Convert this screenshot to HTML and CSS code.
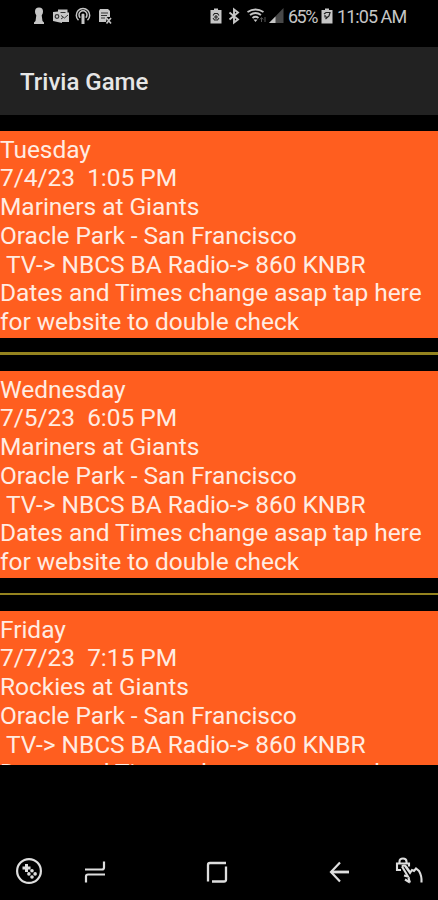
FILE: index.html
```html
<!DOCTYPE html>
<html lang="en">
<head>
  <meta charset="UTF-8" />
  <meta name="viewport" content="width=device-width, initial-scale=1.0"/>
  <title>Trivia Game</title>
  <link rel="stylesheet" href="styles.css">
</head>
<body>
  <div class="status-bar">
    <div class="notifications">
      <svg width="16" height="18" viewBox="0 0 16 18" fill="currentColor"><circle cx="8" cy="4.600" r="4"/><path d="M4.500 6.500h7l-.8 2L11.500 14l1.500 1.500V17H3v-1.500L4.500 14l.8-5.500z"/></svg>
      <svg width="16" height="18" viewBox="0 0 16 18"><path fill="currentColor" d="M5 2.500h9.500v3H16V15H9v1L0 14V5l5-.5z"/><circle cx="4" cy="9.500" r="1.800" fill="none" stroke="#333" stroke-width="1.200"/><path fill="none" stroke="#333" d="M7.500 5.500h5M8 8.500l3.500 2.500L15 8M8 12l2-1.500"/></svg>
      <svg width="16" height="18" viewBox="0 0 16 18" fill="none" stroke="currentColor" stroke-width="1.500"><path d="M3.500 13.200a6.700 6.700 0 1 1 9 0M5.200 10.700a4 4 0 1 1 5.600 0"/><circle cx="8" cy="8" r="1.600" fill="currentColor" stroke="none"/><path d="M8 9v8" stroke-width="3"/></svg>
      <svg width="16" height="18" viewBox="0 0 16 18"><path fill="currentColor" d="M3 2h8l2 2v6h-3l-1 5H2V4z"/><path stroke="#333" d="M4 6h7M4 8.500h6M4 11h4"/><path stroke="currentColor" stroke-width="1.600" d="M9.500 11l4.500 5.500M14 11l-4.500 5.500"/></svg>
    </div>
    <div class="system">
      <svg width="12" height="18" viewBox="0 0 12 18"><path fill="currentColor" d="M4 1.500h4V3h3.500v13.500H.5V3H4z"/><path fill="none" stroke="#222" stroke-width="1.100" d="M3 8.500l1.500-2h3l1.500 2M3 11l1.500 2h3L9 11M6 8v4M4 10h4"/></svg>
      <svg class="bluetooth" width="12" height="18" viewBox="0 0 12 18" fill="none" stroke="currentColor" stroke-width="1.900"><path d="M1.500 5.500l8.500 7L6 15.500v-13l4 3-8.500 7"/></svg>
      <svg class="wifi" width="20" height="18" viewBox="0 0 20 18" fill="none" stroke="currentColor" stroke-width="1.900"><path d="M.5 5q8-5 16 0M3 8q5.500-4 11 0M5.500 11q3-2.300 6 0"/><path d="M6.500 12.500h4l-2 2.500z" fill="currentColor" stroke="none"/><path d="M14.500 15v-4M12.800 12.500l1.700-2 1.700 2M18 10v5" stroke="#555" stroke-width="1"/></svg>
      <svg width="16" height="18" viewBox="0 0 16 18"><path fill="#484848" d="M15.500 1v15H1z"/><path fill="currentColor" d="M7.500 9.400V16H1z"/></svg>
      <span class="percent">65%</span>
      <svg class="battery" width="12" height="18" viewBox="0 0 12 18"><path fill="currentColor" d="M4 1.500h4V3h3.500v13.500H.5V3H4z"/><path fill="none" stroke="#222" stroke-width="1.200" d="M3 7l2-1.500h4L8 9l-3.500 3M4 8v2h3"/></svg>
      <span class="clock">11:05 AM</span>
    </div>
  </div>

  <header class="app-bar">
    <h1>Trivia Game</h1>
  </header>

  <main class="game-list">
    <div class="game">Tuesday
7/4/23  1:05 PM
Mariners at Giants
Oracle Park - San Francisco
 TV-&gt; NBCS BA Radio-&gt; 860 KNBR
Dates and Times change asap tap here for website to double check</div>
    <hr class="divider">
    <div class="game">Wednesday
7/5/23  6:05 PM
Mariners at Giants
Oracle Park - San Francisco
 TV-&gt; NBCS BA Radio-&gt; 860 KNBR
Dates and Times change asap tap here for website to double check</div>
    <hr class="divider thin">
    <div class="game">Friday
7/7/23  7:15 PM
Rockies at Giants
Oracle Park - San Francisco
 TV-&gt; NBCS BA Radio-&gt; 860 KNBR
Dates and Times change asap tap here for website to double check</div>
  </main>

  <nav class="nav-bar">
    <svg width="28" height="28" viewBox="0 0 28 28"><circle cx="14" cy="14" r="11.900" fill="none" stroke="currentColor" stroke-width="2.200"/><path fill="currentColor" d="M10 7h3v2.500h2.500v3H13V15h-3v-2.500H7.500v-3H10z"/><g fill="currentColor"><circle cx="17" cy="13.800" r="1.800"/><circle cx="17" cy="20" r="1.800"/><circle cx="13.900" cy="16.900" r="1.800"/><circle cx="20.100" cy="16.900" r="1.800"/></g></svg>
    <svg class="recents" width="24" height="28" viewBox="0 0 24 28" fill="none" stroke="currentColor" stroke-width="2.200"><path d="M2 12.500h17q2 0 2-2V4.500M22 17.500H5q-2 0-2 2v6"/></svg>
    <svg class="home" width="24" height="28" viewBox="0 0 24 28" fill="none" stroke="currentColor" stroke-width="2.300"><path d="M3 24.500V8q0-2 2-2h16M21 9.500v13q0 2-2 2H7"/></svg>
    <svg class="back" width="24" height="28" viewBox="0 0 24 28" fill="none" stroke="currentColor"><path stroke-width="2.800" d="M3 15h18"/><path stroke-width="2.200" d="M12 5.500L3 15l9 9.500"/></svg>
    <svg class="touch" width="30" height="28" viewBox="0 0 30 28" fill="none" stroke="currentColor" stroke-width="2.100"><path d="M7 13H3V6.500h12v3M5.500 6.500V4.500q0-3 3.500-3t3.500 3v2"/><path d="M8 9.500q2-2 4 0l4 5.500M8 9.500l6 10-4-1M14 19.500l2 6M11 22.500l5 3M11 9l5 7 2-3 2 1 2-2.500 3 2.500q3 5 2.500 11.500"/></svg>
  </nav>
</body>
</html>
```
FILE: styles.css
```css
* {
  box-sizing: border-box;
}
body {
  display: flex;
  flex-direction: column;
  height: 900px;
  margin: 0;
  overflow: hidden;
  background: #000;
  color: #fff;
  font-family: Roboto, sans-serif;
}
svg {
  display: block;
  flex: none;
}
.status-bar {
  display: flex;
  justify-content: space-between;
  height: 47px;
  padding: 7px 33px 0 31px;
  color: #c6c6c6;
}
.notifications, .system {
  display: flex;
  height: 18px;
}
.notifications {
  gap: 6px;
}
.system {
  align-items: center;
  font-size: 18px;
  white-space: nowrap;
}
.bluetooth {
  margin-left: 6px;
}
.wifi {
  margin: 0 1px 0 7px;
}
.percent {
  width: 29px;
  margin-left: 4px;
  letter-spacing: -1.500px;
}
.battery {
  margin: 0 4px 0 4px;
}
.clock {
  width: 68px;
  letter-spacing: -0.950px;
}
.app-bar {
  display: flex;
  align-items: center;
  height: 68px;
  padding: 2px 20px 0;
  background: #222;
}
.app-bar h1 {
  margin: 0;
  color: #e6e6e6;
  font-size: 24px;
  font-weight: 500;
}
.game-list {
  height: 650px;
  padding-top: 16px;
  overflow: hidden;
}
.game {
  height: 206.500px;
  padding-top: 4.500px;
  background: #ff5e1f;
  color: #ffece2;
  font-size: 24.500px;
  line-height: 28.750px;
  letter-spacing: -0.040px;
  white-space: pre-wrap;
}
.divider {
  height: 3px;
  margin: 14.500px 0 16px;
  border: none;
  background: #94831f;
}
.divider.thin {
  height: 2px;
  margin: 15.500px 0 16px;
}
.nav-bar {
  display: flex;
  margin-top: 92px;
  padding-left: 15px;
  color: #dedede;
}
.recents {
  margin-left: 40px;
}
.home {
  margin-left: 98px;
}
.back {
  margin-left: 99px;
}
.touch {
  margin-left: 42px;
}
```
